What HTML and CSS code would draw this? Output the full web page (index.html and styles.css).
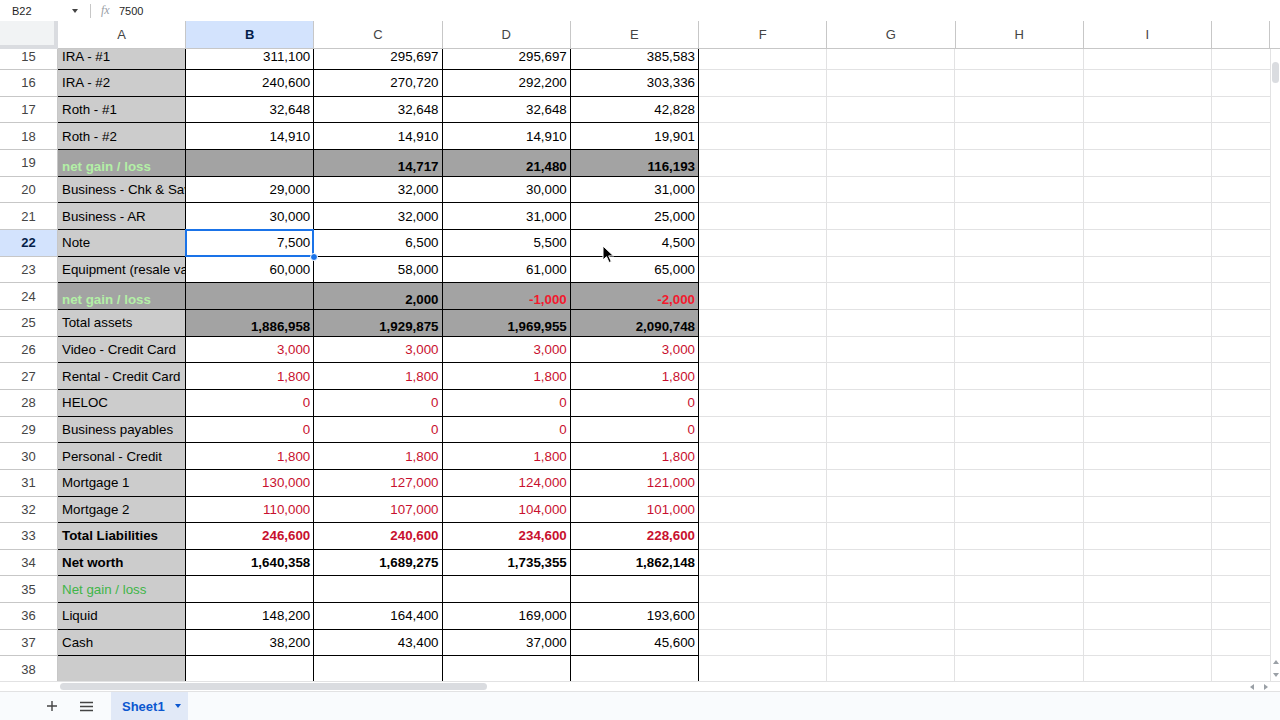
FILE: index.html
```html
<!DOCTYPE html>
<html>
<head>
<meta charset="utf-8">
<link rel="stylesheet" href="styles.css">
</head>
<body>
<div class="app">
  <div class="fbar">
    <div class="namebox"><span>B22</span><span class="tri"></span></div>
    <div class="sep"></div>
    <div class="fx">fx</div>
    <div class="fval">7500</div>
  </div>

  <div class="colhead">
    <div class="corner"></div>
    <div class="ch">A</div>
    <div class="ch on">B</div>
    <div class="ch">C</div>
    <div class="ch">D</div>
    <div class="ch">E</div>
    <div class="ch">F</div>
    <div class="ch">G</div>
    <div class="ch">H</div>
    <div class="ch">I</div>
    <div class="ch"></div>
    <div class="chgap"></div>
  </div>

  <div class="viewport">
    <div class="grid">
      <div class="rows">
        <div class="row"><div class="rh">15</div><div class="c a">IRA - #1</div><div class="c">311,100</div><div class="c">295,697</div><div class="c">295,697</div><div class="c">385,583</div><div class="rest"></div></div>
        <div class="row"><div class="rh">16</div><div class="c a">IRA - #2</div><div class="c">240,600</div><div class="c">270,720</div><div class="c">292,200</div><div class="c">303,336</div><div class="rest"></div></div>
        <div class="row"><div class="rh">17</div><div class="c a">Roth - #1</div><div class="c">32,648</div><div class="c">32,648</div><div class="c">32,648</div><div class="c">42,828</div><div class="rest"></div></div>
        <div class="row"><div class="rh">18</div><div class="c a">Roth - #2</div><div class="c">14,910</div><div class="c">14,910</div><div class="c">14,910</div><div class="c">19,901</div><div class="rest"></div></div>
        <div class="row"><div class="rh">19</div><div class="c a dk bt gl">net gain / loss</div><div class="c dk bt"></div><div class="c dk bt b">14,717</div><div class="c dk bt b">21,480</div><div class="c dk bt b">116,193</div><div class="rest"></div></div>
        <div class="row"><div class="rh">20</div><div class="c a">Business - Chk &amp; Savings</div><div class="c">29,000</div><div class="c">32,000</div><div class="c">30,000</div><div class="c">31,000</div><div class="rest"></div></div>
        <div class="row"><div class="rh">21</div><div class="c a">Business - AR</div><div class="c">30,000</div><div class="c">32,000</div><div class="c">31,000</div><div class="c">25,000</div><div class="rest"></div></div>
        <div class="row"><div class="rh sel-h">22</div><div class="c a">Note</div><div class="c sel">7,500<span class="handle"></span></div><div class="c">6,500</div><div class="c">5,500</div><div class="c">4,500</div><div class="rest"></div></div>
        <div class="row"><div class="rh">23</div><div class="c a">Equipment (resale value)</div><div class="c">60,000</div><div class="c">58,000</div><div class="c">61,000</div><div class="c">65,000</div><div class="rest"></div></div>
        <div class="row"><div class="rh">24</div><div class="c a dk bt gl">net gain / loss</div><div class="c dk bt"></div><div class="c dk bt b">2,000</div><div class="c dk bt b bred">-1,000</div><div class="c dk bt b bred">-2,000</div><div class="rest"></div></div>
        <div class="row"><div class="rh">25</div><div class="c a">Total assets</div><div class="c dk bt b">1,886,958</div><div class="c dk bt b">1,929,875</div><div class="c dk bt b">1,969,955</div><div class="c dk bt b">2,090,748</div><div class="rest"></div></div>
        <div class="row"><div class="rh">26</div><div class="c a">Video - Credit Card</div><div class="c red">3,000</div><div class="c red">3,000</div><div class="c red">3,000</div><div class="c red">3,000</div><div class="rest"></div></div>
        <div class="row"><div class="rh">27</div><div class="c a">Rental - Credit Card</div><div class="c red">1,800</div><div class="c red">1,800</div><div class="c red">1,800</div><div class="c red">1,800</div><div class="rest"></div></div>
        <div class="row"><div class="rh">28</div><div class="c a">HELOC</div><div class="c red">0</div><div class="c red">0</div><div class="c red">0</div><div class="c red">0</div><div class="rest"></div></div>
        <div class="row"><div class="rh">29</div><div class="c a">Business payables</div><div class="c red">0</div><div class="c red">0</div><div class="c red">0</div><div class="c red">0</div><div class="rest"></div></div>
        <div class="row"><div class="rh">30</div><div class="c a">Personal - Credit</div><div class="c red">1,800</div><div class="c red">1,800</div><div class="c red">1,800</div><div class="c red">1,800</div><div class="rest"></div></div>
        <div class="row"><div class="rh">31</div><div class="c a">Mortgage 1</div><div class="c red">130,000</div><div class="c red">127,000</div><div class="c red">124,000</div><div class="c red">121,000</div><div class="rest"></div></div>
        <div class="row"><div class="rh">32</div><div class="c a">Mortgage 2</div><div class="c red">110,000</div><div class="c red">107,000</div><div class="c red">104,000</div><div class="c red">101,000</div><div class="rest"></div></div>
        <div class="row"><div class="rh">33</div><div class="c a b">Total Liabilities</div><div class="c red b">246,600</div><div class="c red b">240,600</div><div class="c red b">234,600</div><div class="c red b">228,600</div><div class="rest"></div></div>
        <div class="row"><div class="rh">34</div><div class="c a b">Net worth</div><div class="c b">1,640,358</div><div class="c b">1,689,275</div><div class="c b">1,735,355</div><div class="c b">1,862,148</div><div class="rest"></div></div>
        <div class="row"><div class="rh">35</div><div class="c a g">Net gain / loss</div><div class="c"></div><div class="c"></div><div class="c"></div><div class="c"></div><div class="rest"></div></div>
        <div class="row"><div class="rh">36</div><div class="c a">Liquid</div><div class="c">148,200</div><div class="c">164,400</div><div class="c">169,000</div><div class="c">193,600</div><div class="rest"></div></div>
        <div class="row"><div class="rh">37</div><div class="c a">Cash</div><div class="c">38,200</div><div class="c">43,400</div><div class="c">37,000</div><div class="c">45,600</div><div class="rest"></div></div>
        <div class="row"><div class="rh">38</div><div class="c a"></div><div class="c"></div><div class="c"></div><div class="c"></div><div class="c"></div><div class="rest"></div></div>
      </div>
    </div>
    <div class="vscroll">
      <div class="vthumb"></div>
      <div class="varrows"><span class="tri-up"></span><span class="tri-down"></span></div>
    </div>
  </div>

  <div class="hscroll">
    <div class="hthumb"></div>
    <div class="harrows"><span class="tri-left"></span><span class="tri-right"></span></div>
  </div>

  <div class="tabbar">
    <div class="tbtn">
      <svg width="12" height="12" viewBox="0 0 12 12"><path d="M6 1v10M1 6h10" stroke="#444" stroke-width="1.4" fill="none"/></svg>
    </div>
    <div class="tbtn">
      <svg width="13" height="11" viewBox="0 0 13 11"><path d="M0 1.5h13M0 5.5h13M0 9.5h13" stroke="#444" stroke-width="1.4" fill="none"/></svg>
    </div>
    <div class="tab"><span>Sheet1</span><span class="tabtri"></span></div>
  </div>

  <svg class="cursor" width="13" height="19" viewBox="0 0 13 19"><path d="M1 1v14l3.5-3.3 2.6 5.8 2.2-1-2.6-5.6h4.8z" fill="#000" stroke="#fff" stroke-width="1"/></svg>
</div>
</body>
</html>
```

FILE: styles.css
```css
* { box-sizing: border-box; }

body {
  margin: 0;
  width: 1280px;
  height: 720px;
  overflow: hidden;
  background: #fff;
  font-family: "Liberation Sans", Arial, sans-serif;
}

.app {
  position: relative;
  display: flex;
  flex-direction: column;
  width: 1280px;
  height: 720px;
}

/* formula bar */
.fbar {
  height: 21px;
  display: flex;
  align-items: center;
  font-size: 11px;
  color: #1f1f1f;
}
.namebox {
  width: 90px;
  padding: 0 12px 0 12px;
  display: flex;
  align-items: center;
  justify-content: space-between;
}
.tri {
  width: 0;
  height: 0;
  border-left: 3.5px solid transparent;
  border-right: 3.5px solid transparent;
  border-top: 4px solid #444;
}
.sep {
  width: 1px;
  height: 14px;
  background: #c7c7c7;
}
.fx {
  margin-left: 10px;
  width: 14px;
  font-family: "Liberation Serif", serif;
  font-style: italic;
  font-size: 12px;
  color: #9aa0a6;
}
.fval {
  margin-left: 4px;
}

/* column headers */
.colhead {
  height: 28px;
  display: grid;
  grid-template-columns: 58px 128px repeat(8, 128.25px) 1fr 10px;
}
.corner {
  background: #f1f3f4;
  border-right: 4px solid #dadce0;
  border-bottom: 4px solid #dadce0;
}
.ch {
  display: flex;
  align-items: center;
  justify-content: center;
  border-right: 1px solid #c7c7c7;
  border-bottom: 1px solid #c7c7c7;
  font-size: 13px;
  color: #444;
  background: #fff;
}
.ch.on {
  background: #d3e3fd;
  color: #041e49;
  font-weight: bold;
}
.chgap {
  border-bottom: 1px solid #c7c7c7;
}

/* grid */
.viewport {
  height: 632px;
  display: flex;
}
.grid {
  flex: 1;
  overflow: hidden;
}
.rows {
  margin-top: -5.67px;
}
.row {
  height: 26.67px;
  display: grid;
  grid-template-columns: 58px 128px repeat(4, 128.25px) 1fr;
}
.rh {
  display: flex;
  align-items: center;
  justify-content: center;
  border-right: 1px solid #c7c7c7;
  border-bottom: 1px solid #c7c7c7;
  font-size: 13px;
  color: #444;
  background: #fff;
}
.rh.sel-h {
  background: #d3e3fd;
  color: #041e49;
  font-weight: bold;
}
.c {
  display: flex;
  align-items: center;
  justify-content: flex-end;
  padding: 0 3px 0 4px;
  border-right: 1px solid #000;
  border-bottom: 1px solid #000;
  font-size: 13.33px;
  line-height: 17px;
  color: #000;
  white-space: nowrap;
  overflow: hidden;
  background: #fff;
}
.c.a {
  justify-content: flex-start;
  background: #cccccc;
}
.c.dk { background: #a3a3a3; }
.c.bt {
  align-items: flex-end;
  padding-bottom: 1px;
}
.b { font-weight: bold; }
.red { color: #c8102e; }
.bred { color: #f21a2e; }
.gl { color: #b3f0a6; font-weight: bold; }
.g { color: #3fb548; }

.c.sel {
  position: relative;
  overflow: visible;
  z-index: 2;
}
.c.sel::after {
  content: "";
  position: absolute;
  left: -1px;
  top: -1px;
  right: -1px;
  bottom: -1px;
  border: 2px solid #1a73e8;
}
.handle {
  position: absolute;
  right: -5px;
  bottom: -5px;
  width: 8px;
  height: 8px;
  border-radius: 50%;
  background: #1a73e8;
  border: 1px solid #fff;
  z-index: 3;
}

.rest {
  border-bottom: 1px solid #e2e2e3;
  background-image: repeating-linear-gradient(to right, transparent 0, transparent 127.25px, #e2e2e3 127.25px, #e2e2e3 128.25px);
}

/* vertical scrollbar */
.vscroll {
  width: 10px;
  display: flex;
  flex-direction: column;
  justify-content: space-between;
  border-left: 1px solid #e2e2e3;
  background: #fff;
}
.vthumb {
  margin: 13px 0 0 1px;
  width: 7px;
  height: 21px;
  border-radius: 4px;
  background: #dadce0;
}
.varrows {
  display: flex;
  flex-direction: column;
  align-items: center;
  gap: 9px;
  padding-bottom: 4px;
}
.tri-up {
  width: 0;
  height: 0;
  border-left: 3px solid transparent;
  border-right: 3px solid transparent;
  border-bottom: 4px solid #9aa0a6;
}
.tri-down {
  width: 0;
  height: 0;
  border-left: 3px solid transparent;
  border-right: 3px solid transparent;
  border-top: 4px solid #9aa0a6;
}

/* horizontal scrollbar */
.hscroll {
  height: 11px;
  display: flex;
  align-items: center;
  justify-content: space-between;
  border-top: 1px solid #e2e2e3;
  border-bottom: 1px solid #e2e2e3;
  background: #fff;
}
.hthumb {
  margin-left: 60px;
  width: 427px;
  height: 7px;
  border-radius: 4px;
  background: #dadce0;
}
.harrows {
  display: flex;
  align-items: center;
  gap: 10px;
  margin-right: 12px;
}
.tri-left {
  width: 0;
  height: 0;
  border-top: 3px solid transparent;
  border-bottom: 3px solid transparent;
  border-right: 4px solid #9aa0a6;
}
.tri-right {
  width: 0;
  height: 0;
  border-top: 3px solid transparent;
  border-bottom: 3px solid transparent;
  border-left: 4px solid #9aa0a6;
}

/* tab bar */
.tabbar {
  flex: 1;
  display: flex;
  align-items: stretch;
  background: #f9fbfd;
  padding-left: 40px;
}
.tbtn {
  width: 24px;
  display: flex;
  align-items: center;
  justify-content: center;
  margin-right: 10px;
}
.tab {
  margin-left: 3px;
  width: 77px;
  display: flex;
  align-items: center;
  gap: 10px;
  padding-left: 11px;
  background: #e1e9f7;
  color: #0b57d0;
  font-size: 13px;
  font-weight: bold;
}
.tabtri {
  width: 0;
  height: 0;
  border-left: 3.5px solid transparent;
  border-right: 3.5px solid transparent;
  border-top: 4px solid #0b57d0;
}

.cursor {
  position: absolute;
  left: 602px;
  top: 245px;
}
```
